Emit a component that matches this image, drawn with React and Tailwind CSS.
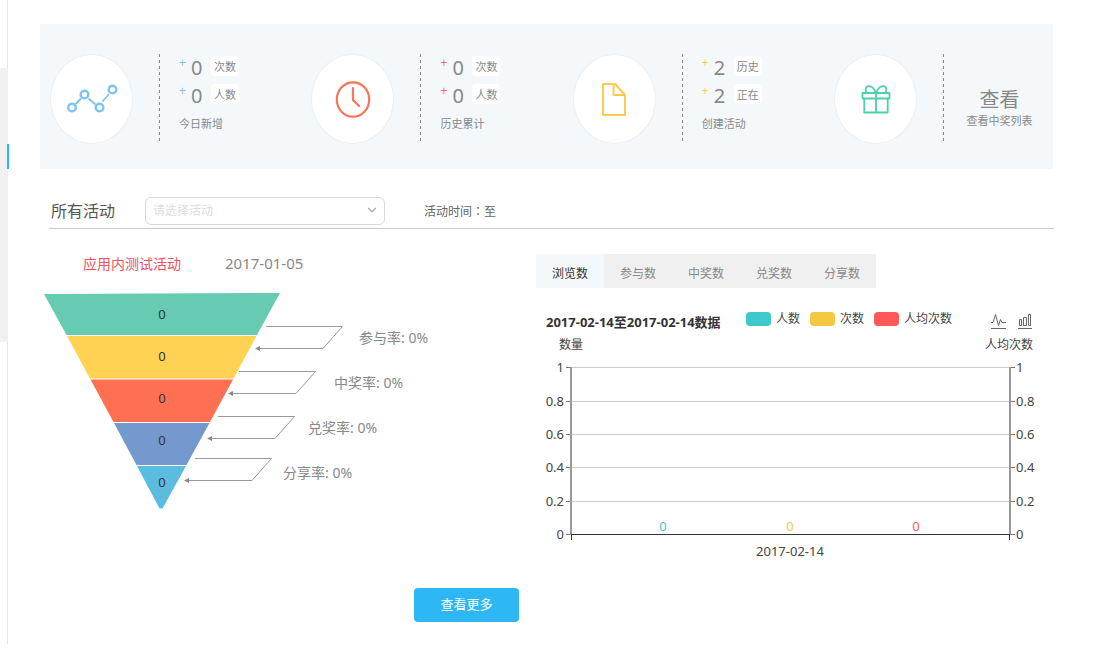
import React from "react";
import { ChevronDown } from "lucide-react";

function TrendIcon() {
  return (
    <svg width="52" height="30" viewBox="0 0 52 30" fill="none" stroke="#7cc3f4" strokeWidth="2.400">
      <circle cx="6" cy="23.500" r="3.800" />
      <circle cx="18.500" cy="10.500" r="3.800" />
      <circle cx="33.500" cy="23.500" r="3.800" />
      <circle cx="46.500" cy="5.500" r="3.800" />
      <path d="M9.500 20L15 14.500M22.500 14.500L29.500 20.500M36.500 17.500L43 10" strokeWidth="1.800" />
    </svg>
  );
}

function ClockIcon() {
  return (
    <svg width="36" height="38" viewBox="0 0 36 38" fill="none" stroke="#fa7459" strokeWidth="2.200">
      <ellipse cx="18" cy="19.500" rx="16.200" ry="17.200" />
      <path d="M18 8V20L24 26" strokeLinecap="round" strokeLinejoin="round" />
    </svg>
  );
}

function FileIcon() {
  return (
    <svg width="26" height="34" viewBox="0 0 26 34" fill="none" stroke="#fdcb52" strokeWidth="2" strokeLinejoin="round">
      <path d="M2 2H14L24 13V33H2Z" />
      <path d="M12.500 2V13H24" />
    </svg>
  );
}

function GiftIcon() {
  return (
    <svg width="30" height="30" viewBox="0 0 30 30" fill="none" stroke="#4bd0b0" strokeWidth="1.800" strokeLinejoin="round">
      <rect x="1.500" y="9" width="27" height="5.500" />
      <path d="M3.300 14.500V28.500H26.700V14.500M15 9V28.500" />
      <path d="M15 9C13 4 10 1.500 7 2.200C4 3 4 7 6 9M15 9C17 4 20 1.500 23 2.200C26 3 26 7 24 9" />
    </svg>
  );
}

const STATS = [
  { icon: <TrendIcon />, plus: "text-[#7cc3f4]", rows: [["0", "次数"], ["0", "人数"]], caption: "今日新增" },
  { icon: <ClockIcon />, plus: "text-[#fa7459]", rows: [["0", "次数"], ["0", "人数"]], caption: "历史累计" },
  { icon: <FileIcon />, plus: "text-[#fdcb52]", rows: [["2", "历史"], ["2", "正在"]], caption: "创建活动" },
];

function Medallion({ children }) {
  return (
    <div className="flex h-[90px] w-[83px] shrink-0 items-center justify-center rounded-[50%] border border-[#eeeeee] bg-white">
      {children}
    </div>
  );
}

function DashedRule() {
  return (
    <div className="ml-[26px] w-px shrink-0 bg-[repeating-linear-gradient(to_bottom,#888888_0px,#888888_3px,transparent_3px,transparent_6px)]" />
  );
}

function Stat({ icon, plus, rows, caption }) {
  return (
    <div className="flex pl-2.5">
      <Medallion>{icon}</Medallion>
      <DashedRule />
      <div className="pl-[19px]">
        <dl className="flex flex-col gap-2 pt-0.5">
          {rows.map(([value, label]) => (
            <div key={label} className="flex h-5 items-center">
              <span className={`w-3 self-start text-xs leading-[14px] ${plus}`}>+</span>
              <dd className="w-5 pt-1 text-[20px] leading-5">{value}</dd>
              <dt className="h-5 w-7 rounded-sm bg-white text-center text-[11px] leading-[22px]">{label}</dt>
            </div>
          ))}
        </dl>
        <p className="mt-2.5 text-[11px] leading-5">{caption}</p>
      </div>
    </div>
  );
}

const LAYERS = [
  { points: "4,1 240,0 217,42 26.500,42", fill: "#66cbb0" },
  { points: "27,43 216.500,43 193.500,85.500 50,85.500", fill: "#ffd254" },
  { points: "50.500,86.500 193,86.500 170,129 73.500,129", fill: "#fe7051" },
  { points: "74,130 169.500,130 146.500,172 96.500,172", fill: "#7399ce" },
  { points: "97,173 146,173 122.500,215.500 119.500,215.500", fill: "#5cbcdf" },
];

const RATES = [
  { label: "参与率: 0%", x: 226, y: 33.5, tx: 319, ty: 50 },
  { label: "中奖率: 0%", x: 199, y: 78.5, tx: 294, ty: 95 },
  { label: "兑奖率: 0%", x: 178, y: 123.5, tx: 268, ty: 140 },
  { label: "分享率: 0%", x: 155, y: 165.5, tx: 243, ty: 185 },
];

function Funnel() {
  return (
    <svg className="block w-full" viewBox="0 0 496 220" role="img" aria-label="转化漏斗">
      {LAYERS.map((l) => (
        <polygon key={l.fill} points={l.points} fill={l.fill} />
      ))}
      {LAYERS.map((l, i) => (
        <text key={l.fill} x="122" y={26 + i * 42} textAnchor="middle" fontSize="13" fill="#333333">0</text>
      ))}
      {RATES.map((r) => (
        <g key={r.label}>
          <path
            d={`M${r.x} ${r.y}h76.500l-19.500 22h-64`}
            fill="none"
            stroke="#999999"
            strokeWidth="1"
          />
          <path d={`M${r.x - 11} ${r.y + 22}l5-2.500v5z`} fill="#888888" />
          <text x={r.tx} y={r.ty} fontSize="14" fill="#888888">{r.label}</text>
        </g>
      ))}
    </svg>
  );
}

const TICKS = ["1", "0.8", "0.6", "0.4", "0.2", "0"];
const TICK_Y = [11.5, 45.5, 78.5, 111.5, 145.5, 178.5];
const SERIES = [
  { label: "人数", swatch: "bg-[#3dc8cb]", fill: "#3dc8cb", x: 127 },
  { label: "次数", swatch: "bg-[#f5c842]", fill: "#f5c842", x: 254 },
  { label: "人均次数", swatch: "bg-[#ff5858]", fill: "#ff5858", x: 380 },
];

function Plot() {
  return (
    <svg className="block w-full" viewBox="0 0 517 208" fontSize="13" fill="#444444" role="img" aria-label="活动数据图">
      {TICKS.map((t, i) => (
        <g key={t}>
          {i < 5 && <path d={`M35 ${TICK_Y[i]}H474`} stroke="#cccccc" />}
          <path d={`M30 ${TICK_Y[i]}H35M474 ${TICK_Y[i]}H479`} stroke="#777777" />
          <text x="28" y={TICK_Y[i] + 4.5} textAnchor="end">{t}</text>
          <text x="480" y={TICK_Y[i] + 4.5}>{t}</text>
        </g>
      ))}
      <path d="M35 11V179M474 11V179" stroke="#999999" strokeWidth="2" />
      <path d="M35 178.500H474M35.500 179V184M473.500 179V184" stroke="#333333" />
      {SERIES.map((s) => (
        <text key={s.label} x={s.x} y="175" textAnchor="middle" fontSize="13" fill={s.fill}>0</text>
      ))}
      <text x="254" y="200" textAnchor="middle">2017-02-14</text>
    </svg>
  );
}

const TABS = ["浏览数", "参与数", "中奖数", "兑奖数", "分享数"];

export default function App() {
  return (
    <div className="flex bg-white font-['Noto_Sans','Noto_Sans_CJK_SC',sans-serif] text-[#888888]">
      <aside className="relative h-[644px] w-2 shrink-0 border-r border-[#e6e6e6] pt-[68px]">
        <div className="h-[274px] w-2 bg-[#f1f1f1]" />
        <div className="absolute top-[144px] left-[7px] h-[25px] w-0.5 bg-[#2db7f5]" />
      </aside>

      <main className="min-w-0 flex-1 pt-6 pr-14 pl-8">
        <section className="grid grid-cols-[8fr_8fr_8fr_7fr] bg-[#f4f8fb] pt-[30px] pb-[25px]">
          {STATS.map((s) => (
            <Stat key={s.caption} {...s} />
          ))}
          <div className="flex pl-2.5">
            <Medallion><GiftIcon /></Medallion>
            <DashedRule />
            <a href="#winners" className="flex flex-1 flex-col items-center pt-[34px] pl-0.5 text-center">
              <span className="text-[20px] leading-6">查看</span>
              <span className="text-[11px] leading-[18px] whitespace-nowrap">查看中奖列表</span>
            </a>
          </div>
        </section>

        <section className="mt-7 -mr-px ml-[9px] flex items-center border-b border-[#cccccc] pb-[3px]">
          <label htmlFor="activity" className="ml-0.5 w-[94px] text-[16px] leading-[26px] text-[#555555]">所有活动</label>
          <div className="relative w-60">
            <select
              id="activity"
              defaultValue=""
              className="block h-7 w-full appearance-none rounded-md border border-[#d9d9d9] bg-white px-[7px] text-xs text-[#dddddd] outline-none"
            >
              <option value="">请选择活动</option>
            </select>
            <ChevronDown className="pointer-events-none absolute top-1.5 right-1.5 size-3.5 text-[#aaaaaa]" strokeWidth={2} />
          </div>
          <p className="ml-[39px] font-['Noto_Sans_CJK_TC',sans-serif] text-xs leading-7 text-[#666666]">活动时间：至</p>
        </section>

        <div className="grid grid-cols-[496fr_517fr] pt-[25px]">
          <section>
            <div className="flex h-[39px] gap-11 pl-[43px] leading-5">
              <h2 className="text-[14px] text-[#f04f5f]">应用内测试活动</h2>
              <time className="text-[15px] leading-[18px]">2017-01-05</time>
            </div>
            <Funnel />
          </section>

          <section className="text-xs text-[#444444]">
            <div role="tablist" className="flex">
              {TABS.map((t, i) => (
                <button
                  key={t}
                  type="button"
                  role="tab"
                  aria-selected={i === 0}
                  className={`h-[34px] w-[68px] pt-1.5 ${i === 0 ? "bg-[#f4f8fb] text-[#333333]" : "bg-[#f0f0f0] text-[#888888]"}`}
                >
                  {t}
                </button>
              ))}
            </div>
            <div className="flex items-start pt-[21px] pl-2.5 leading-5">
              <h3 className="w-[200px] pt-1 text-[13px] leading-[18px] font-bold text-[#333333]">2017-02-14至2017-02-14数据</h3>
              <ul className="flex gap-2.5">
                {SERIES.map((s) => (
                  <li key={s.label} className="flex items-center gap-[5px] whitespace-nowrap">
                    <span className={`h-3.5 w-[25px] rounded ${s.swatch}`} />
                    {s.label}
                  </li>
                ))}
              </ul>
              <div className="mr-[21px] ml-auto flex gap-3 pt-1">
                <button type="button" aria-label="折线图">
                  <svg className="block" width="15" height="16" viewBox="0 0 15 16" fill="none" stroke="#666666">
                    <path d="M0 9.500H2L4.500 1.500L7.500 12.500L9.500 6.500L11 9.500H15M0 15.500H15" />
                  </svg>
                </button>
                <button type="button" aria-label="柱状图">
                  <svg className="block" width="14" height="16" viewBox="0 0 14 16" fill="none" stroke="#666666">
                    <path d="M1.500 6.500H3.500V12.500H1.500ZM5.500 4.500H8.500V12.500H5.500ZM10.500 1.500H12.500V12.500H10.500ZM0 15.500H14" />
                  </svg>
                </button>
              </div>
            </div>
            <div className="flex h-[25px] justify-between pt-1 pr-5 pl-[23px] leading-5">
              <span>数量</span>
              <span>人均次数</span>
            </div>
            <Plot />
          </section>
        </div>

        <div className="pt-6 pl-[374px]">
          <button type="button" className="h-[34px] w-[105px] rounded bg-[#2db7f5] text-[13px] text-white">查看更多</button>
        </div>
      </main>
    </div>
  );
}
